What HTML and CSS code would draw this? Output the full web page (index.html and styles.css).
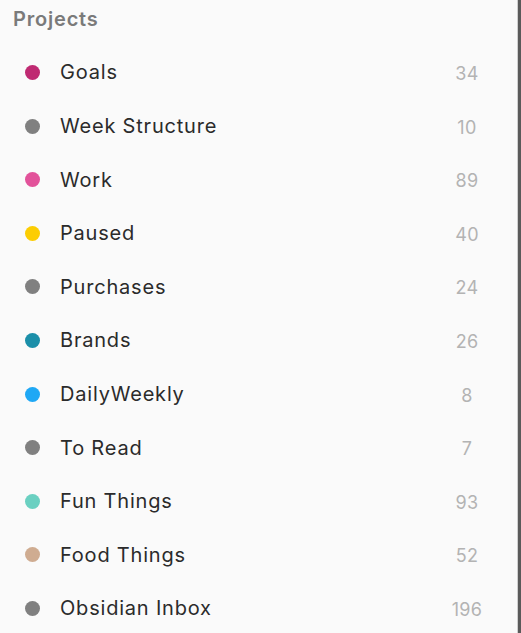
FILE: index.html
```html
<!DOCTYPE html>
<html>
<head>
<meta charset="utf-8">
<link rel="stylesheet" href="styles.css">
</head>
<body>
<div class="sidebar">
  <div class="header">Projects</div>
  <ul class="list">
    <li class="row"><span class="dot c-goals"></span><span class="name">Goals</span><span class="count">34</span></li>
    <li class="row"><span class="dot c-grey"></span><span class="name">Week Structure</span><span class="count">10</span></li>
    <li class="row"><span class="dot c-work"></span><span class="name">Work</span><span class="count">89</span></li>
    <li class="row"><span class="dot c-paused"></span><span class="name">Paused</span><span class="count">40</span></li>
    <li class="row"><span class="dot c-grey"></span><span class="name">Purchases</span><span class="count">24</span></li>
    <li class="row"><span class="dot c-brands"></span><span class="name">Brands</span><span class="count">26</span></li>
    <li class="row"><span class="dot c-daily"></span><span class="name">DailyWeekly</span><span class="count">8</span></li>
    <li class="row"><span class="dot c-grey"></span><span class="name">To Read</span><span class="count">7</span></li>
    <li class="row"><span class="dot c-fun"></span><span class="name">Fun Things</span><span class="count">93</span></li>
    <li class="row"><span class="dot c-food"></span><span class="name">Food Things</span><span class="count">52</span></li>
    <li class="row"><span class="dot c-grey"></span><span class="name">Obsidian Inbox</span><span class="count">196</span></li>
  </ul>
</div>
</body>
</html>
```
FILE: styles.css
```css
html, body {
  margin: 0;
  padding: 0;
  background: #fafafa;
}
body {
  font-family: Inter, "Noto Sans", "Liberation Sans", sans-serif;
  width: 521px;
  height: 633px;
  overflow: hidden;
}
.sidebar {
  width: 518px;
  height: 633px;
  box-sizing: border-box;
  border-right: 1px solid #cfcfcf;
  box-shadow: 3px 0 0 #5a5a5a;
  background: #fafafa;
}
.header {
  height: 45.7px;
  box-sizing: border-box;
  padding: 7px 0 0 13px;
  font-size: 20px;
  font-weight: 600;
  letter-spacing: 0.8px;
  color: #7a7a7a;
  line-height: 24px;
}
.list {
  list-style: none;
  margin: 0;
  padding: 0;
}
.row {
  height: 53.6px;
  display: flex;
  align-items: center;
  padding-left: 25px;
  padding-right: 20px;
}
.dot {
  width: 15px;
  height: 15px;
  border-radius: 50%;
  flex: none;
}
.name {
  margin-left: 20px;
  font-size: 20px;
  letter-spacing: 0.8px;
  color: #2b2b2b;
  flex: 1;
  line-height: 24px;
}
.count {
  width: 60px;
  padding-top: 3px;
  text-align: center;
  font-size: 18px;
  letter-spacing: 0.3px;
  color: #b3b3b3;
  line-height: 24px;
}
.c-goals { background: #bf2a72; }
.c-grey { background: #808080; }
.c-work { background: #e2529a; }
.c-paused { background: #fccd02; }
.c-brands { background: #1b8fa9; }
.c-daily { background: #1fa8f5; }
.c-fun { background: #6ad0c1; }
.c-food { background: #cfac91; }
```
